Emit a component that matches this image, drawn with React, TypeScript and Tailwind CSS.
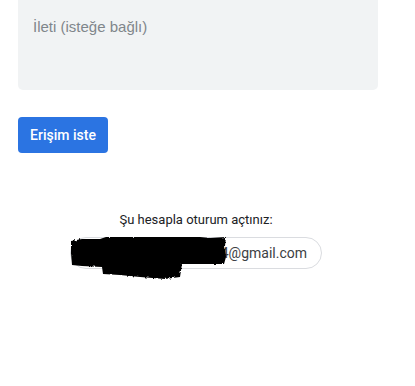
import React from "react";

export default function App() {
  return (
    <div className="w-[415px] h-[386px] bg-white overflow-hidden relative">
      <div className="ml-[18px] w-[360px] flex flex-col">
        <div className="h-[90px] bg-[#f1f3f4] rounded-b-[5px] pl-[15px] pt-[18px]">
          <div
            className="text-[15px] leading-[17px] text-[#80868b]"
            style={{ fontFamily: '"Liberation Sans", Arial, sans-serif' }}
          >
            İleti (isteğe bağlı)
          </div>
        </div>
        <div className="mt-[27px]">
          <button
            className="w-[90px] h-[36px] bg-[#2b74e2] rounded-[4px] text-white text-[14px] font-medium flex items-center justify-center"
            style={{ fontFamily: 'Roboto, "Open Sans", sans-serif' }}
          >
            Erişim iste
          </button>
        </div>
        <div
          className="mt-[59px] text-center text-[13px] leading-[16px] text-[#202124] pr-[4px]"
          style={{ fontFamily: 'Roboto, "Open Sans", sans-serif' }}
        >
          Şu hesapla oturum açtınız:
        </div>
        <div className="mt-[9px] ml-[52px] relative w-[252px]">
          <div
            className="h-[32px] w-[252px] rounded-full border border-[#dadce0] flex items-center justify-end pr-[14px] text-[14px] text-[#3c4043]"
            style={{ fontFamily: 'Roboto, "Open Sans", sans-serif' }}
          >
            4@gmail.com
          </div>
          <svg
            className="absolute left-0 top-0"
            width="160"
            height="44"
            viewBox="0 0 160 44"
          >
            <defs>
              <filter id="rough">
                <feTurbulence type="fractalNoise" baseFrequency="0.35" numOctaves="2" result="n" />
                <feDisplacementMap in="SourceGraphic" in2="n" scale="3" />
                <feGaussianBlur stdDeviation="0.5" />
              </filter>
            </defs>
            <path
              filter="url(#rough)"
              fill="#000"
              d="M1,4 L12,2 L30,2 L36,0 L60,0 L100,-1 L130,0 L140,1 L156,0 L155,9 L156,20 L154,27 L130,27 L112,27 L110,40 L95,42 L70,40 L50,38 L33,37 L32,30 L12,29 L2,28 L1,16 Z"
            />
          </svg>
        </div>
      </div>
    </div>
  );
}
